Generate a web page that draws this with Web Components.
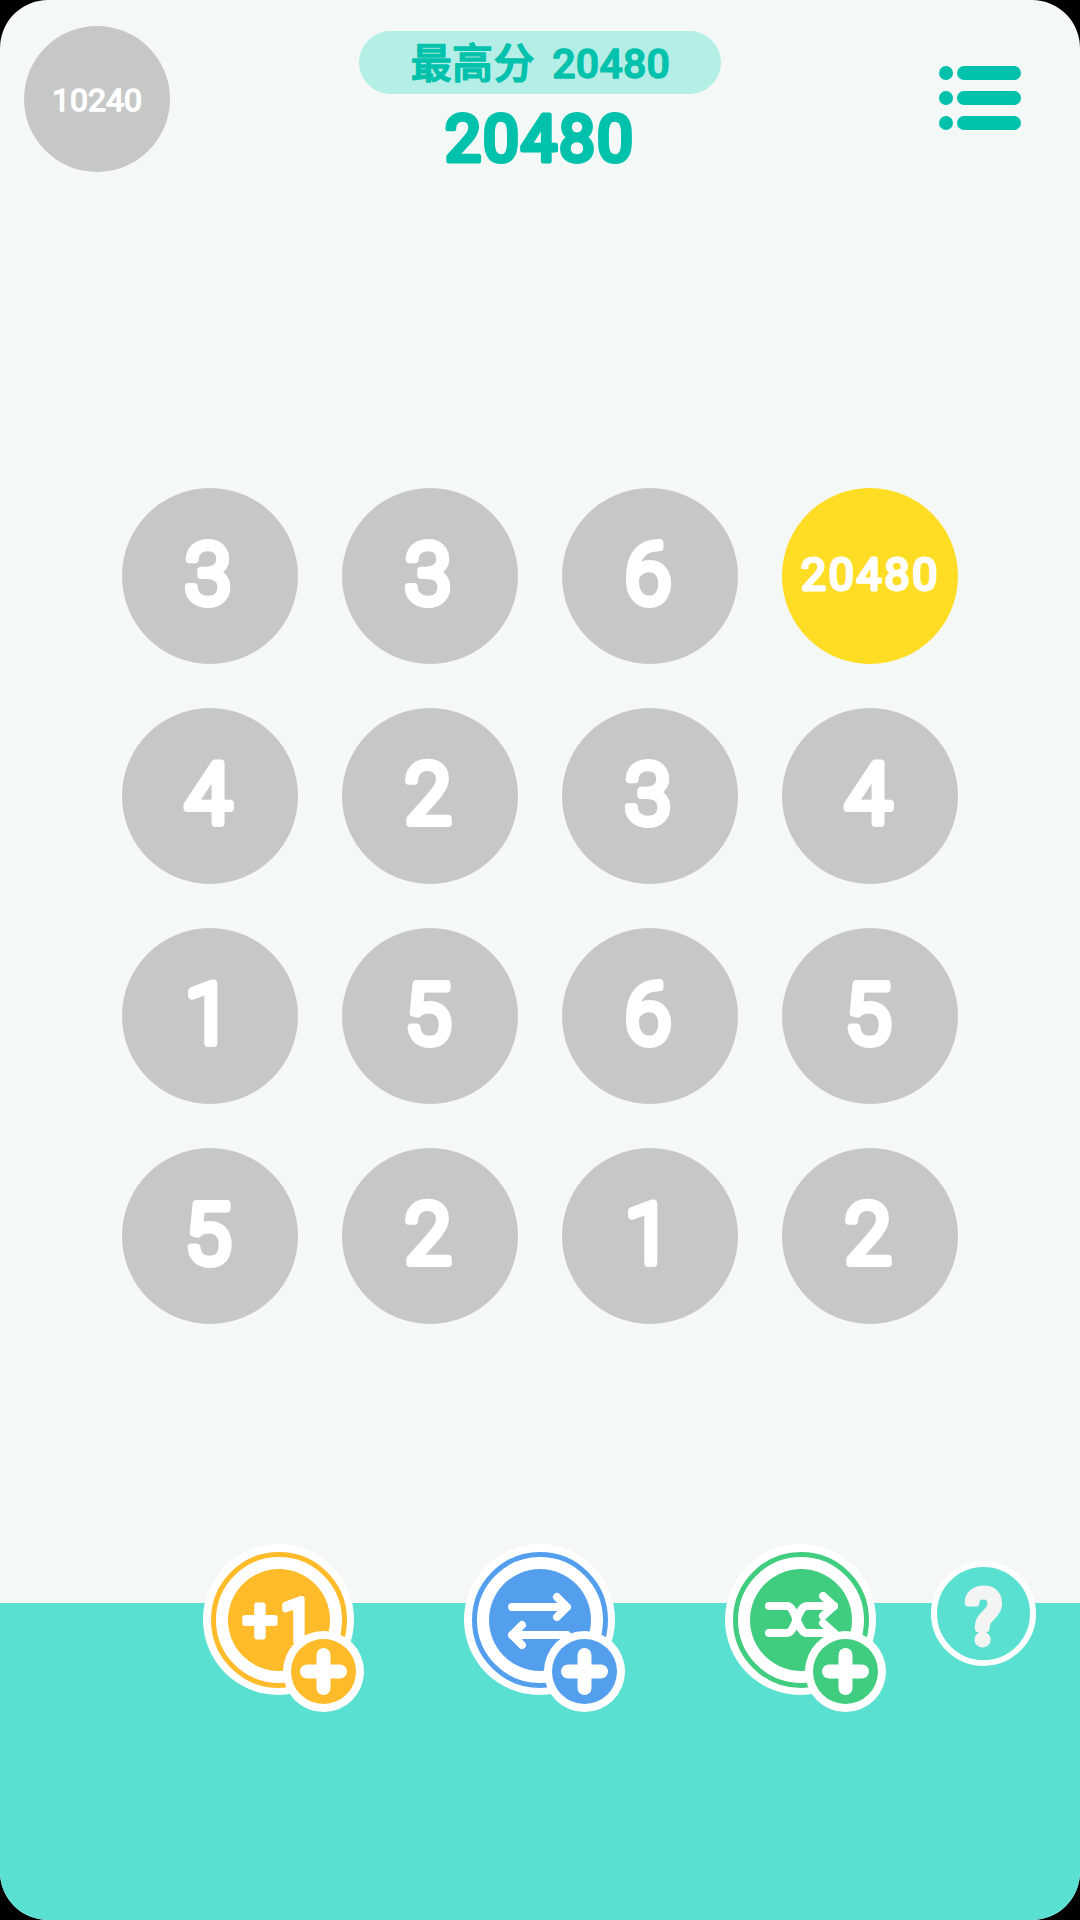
<!DOCTYPE html>
<html lang="zh">
<head>
<meta charset="utf-8">
<title>20480</title>
<style>
  html, body { margin: 0; background: #000; }
  body { width: 1080px; height: 1920px; overflow: hidden; }
</style>
</head>
<body>
<game-app>
  <game-header slot="header" best="最高分 20480" score="20480" level="10240"></game-header>
  <game-board slot="board" values="3,3,6,20480,4,2,3,4,1,5,6,5,5,2,1,2"></game-board>
  <tool-tray slot="tray">
    <tool-button color="#ffbb29">
      <round-text text="+1" size="60" stroke="6" color="#fff" weight="400" spacing="3" style="margin-left:2px"></round-text>
    </tool-button>
    <tool-button color="#539fee">
      <svg width="102" height="102" viewBox="0 0 102 102" fill="none" stroke="#fff" stroke-width="8" stroke-linecap="round" stroke-linejoin="round">
        <path d="M23 38H78M68 28L78 38L68 48"/>
        <path d="M78 66H23M33 56L23 66L33 76"/>
      </svg>
    </tool-button>
    <tool-button color="#41cd7f">
      <svg width="102" height="102" viewBox="0 0 102 102" fill="none" stroke="#fff" stroke-width="8" stroke-linecap="round" stroke-linejoin="round">
        <path d="M19 37H37C46 37 47 64 57 64H84"/>
        <path d="M19 64H37C46 64 47 37 57 37H84"/>
        <path d="M73 27L84 37L73 47"/>
        <path d="M73 54L84 64L73 74"/>
      </svg>
    </tool-button>
    <help-button></help-button>
  </tool-tray>
</game-app>

<script>
const FONT = 'Roboto, "Noto Sans CJK SC", sans-serif'
const SVG_NS = "http://www.w3.org/2000/svg"

// svg text so the stroke can have round joins, the game font is a rounded one
class RoundText extends HTMLElement {
  constructor() {
    super()
    this._shadowRoot = this.attachShadow({ mode: "open" })
  }

  connectedCallback() {
    const value = this.getAttribute("text")
    const size = Number(this.getAttribute("size"))
    const stroke = this.getAttribute("stroke") || 0
    const color = this.getAttribute("color") || "#fff"
    const weight = this.getAttribute("weight") || 500
    const spacing = this.getAttribute("spacing") || 0
    const words = this.getAttribute("words") || 0
    const width = Math.ceil(value.length * size * 0.9 + 12)
    const height = Math.ceil(size * 1.2)
    this._shadowRoot.innerHTML = `<style>
      :host { display: block; flex: none; line-height: 0; }
      svg { display: block; overflow: visible; }
      text { font-family: ${FONT}; font-weight: ${weight}; letter-spacing: ${spacing}px; word-spacing: ${words}px; stroke-linejoin: round; stroke-linecap: round; }
    </style>`
    const svg = document.createElementNS(SVG_NS, "svg")
    svg.setAttribute("width", width)
    svg.setAttribute("height", height)
    const text = document.createElementNS(SVG_NS, "text")
    text.setAttribute("x", width / 2)
    text.setAttribute("y", height / 2 + size * 0.355)
    text.setAttribute("text-anchor", "middle")
    text.setAttribute("font-size", size)
    text.setAttribute("fill", color)
    text.setAttribute("stroke", color)
    text.setAttribute("stroke-width", stroke)
    text.textContent = value
    svg.appendChild(text)
    this._shadowRoot.appendChild(svg)
  }
}

const appTemplate = document.createElement("template")
appTemplate.innerHTML = `
<style>
  :host { display: flex; flex-direction: column; width: 1080px; height: 1920px; background: #f4f8f7; border-radius: 48px; overflow: hidden; }
  .top { height: 488px; }
  .middle { height: 1115px; }
</style>
<div class="top"><slot name="header"></slot></div>
<div class="middle"><slot name="board"></slot></div>
<slot name="tray"></slot>`

class GameApp extends HTMLElement {
  constructor() {
    super()
    this.attachShadow({ mode: "open" }).appendChild(appTemplate.content.cloneNode(true))
  }
}

const headerTemplate = document.createElement("template")
headerTemplate.innerHTML = `
<style>
  :host { display: grid; grid-template-columns: 1fr 362px 1fr; align-items: start; }
  .level { width: 146px; height: 146px; margin: 26px 0 0 24px; border-radius: 50%; background: #c6c8c7; display: flex; align-items: center; justify-content: center; }
  .center { margin-top: 31px; display: flex; flex-direction: column; align-items: center; }
  .best { width: 100%; height: 63px; border-radius: 32px; background: #b4eee6; display: flex; align-items: center; justify-content: center; }
  .score { margin-top: 6px; }
  .menu { justify-self: end; margin: 66px 59px 0 0; display: grid; grid-template-columns: 14px 64px; gap: 11px 4px; }
  .menu i { height: 14px; border-radius: 7px; background: #00c1ab; }
</style>
<div class="level"></div>
<div class="center">
  <div class="best"></div>
  <div class="score"></div>
</div>
<div class="menu"><i></i><i></i><i></i><i></i><i></i><i></i></div>`

class GameHeader extends HTMLElement {
  constructor() {
    super()
    this._shadowRoot = this.attachShadow({ mode: "open" })
    this._shadowRoot.appendChild(headerTemplate.content.cloneNode(true))
  }

  connectedCallback() {
    this._shadowRoot.querySelector(".level").innerHTML =
      `<round-text text="${this.getAttribute("level")}" size="32" stroke="1.5" color="#fff" weight="400"></round-text>`
    this._shadowRoot.querySelector(".best").innerHTML =
      `<round-text text="${this.getAttribute("best")}" size="41" stroke="1.4" color="#00c1ab" words="7" spacing=".3"></round-text>`
    this._shadowRoot.querySelector(".score").innerHTML =
      `<round-text text="${this.getAttribute("score")}" size="64" stroke="5" color="#00c1ab" weight="400" spacing="2"></round-text>`
  }
}

const tileTemplate = document.createElement("template")
tileTemplate.innerHTML = `
<style>
  :host { display: flex; width: 176px; height: 176px; border-radius: 50%; background: #c6c8c7; align-items: center; justify-content: center; }
  :host([big]) { background: #ffdd24; }
  .shift { margin: 0 4px 5px 0; }
  :host([big]) .shift { margin: 0 0 5px 0; }
</style>
<div class="shift"></div>`

class GameTile extends HTMLElement {
  constructor() {
    super()
    this._shadowRoot = this.attachShadow({ mode: "open" })
    this._shadowRoot.appendChild(tileTemplate.content.cloneNode(true))
  }

  connectedCallback() {
    const value = this.getAttribute("value")
    const big = value.length > 1
    if (big) this.setAttribute("big", "")
    this._shadowRoot.querySelector(".shift").innerHTML = big
      ? `<round-text text="${value}" size="45" stroke="3" color="#fff" weight="400" spacing="2.5"></round-text>`
      : `<round-text text="${value}" size="84" stroke="8" color="#fff" weight="300"></round-text>`
  }
}

const boardTemplate = document.createElement("template")
boardTemplate.innerHTML = `
<style>
  :host { display: grid; grid-template-columns: repeat(4, 176px); gap: 44px; padding-left: 122px; }
</style>
<slot></slot>`

class GameBoard extends HTMLElement {
  constructor() {
    super()
    this.attachShadow({ mode: "open" }).appendChild(boardTemplate.content.cloneNode(true))
  }

  connectedCallback() {
    this.getAttribute("values").split(",").forEach(value => {
      const tile = document.createElement("game-tile")
      tile.setAttribute("value", value)
      this.appendChild(tile)
    })
  }
}

const trayTemplate = document.createElement("template")
trayTemplate.innerHTML = `
<style>
  :host { display: flex; flex: 1; align-items: flex-start; background: #5ae0d1; padding-left: 203px; }
  .row { display: flex; align-items: flex-start; gap: 110px; margin-top: -59px; }
</style>
<div class="row"><slot></slot></div>`

class ToolTray extends HTMLElement {
  constructor() {
    super()
    this.attachShadow({ mode: "open" }).appendChild(trayTemplate.content.cloneNode(true))
  }
}

const toolTemplate = document.createElement("template")
toolTemplate.innerHTML = `
<style>
  :host { display: block; position: relative; width: 151px; height: 151px; flex: none; }
  .outer { width: 151px; height: 151px; border-radius: 50%; background: #fff; display: flex; align-items: center; justify-content: center; }
  .ring { width: 136px; height: 136px; border-radius: 50%; border: 5px solid var(--color); box-sizing: border-box; background: #fff; display: flex; align-items: center; justify-content: center; }
  .disk { width: 102px; height: 102px; border-radius: 50%; background: var(--color); display: flex; align-items: center; justify-content: center; overflow: hidden; }
  .badge { position: absolute; left: 80px; top: 87px; width: 81px; height: 81px; border-radius: 50%; background: #fff; display: flex; align-items: center; justify-content: center; }
  .badge svg { display: block; }
  ::slotted(svg) { display: block; }
</style>
<div class="outer"><div class="ring"><div class="disk"><slot></slot></div></div></div>
<div class="badge">
  <svg width="65" height="65" viewBox="0 0 65 65">
    <circle class="dot" cx="32.5" cy="32.5" r="32.5"/>
    <path d="M32.5 16V49M16 32.5H49" fill="none" stroke="#fff" stroke-width="14" stroke-linecap="round"/>
  </svg>
</div>`

class ToolButton extends HTMLElement {
  constructor() {
    super()
    this._shadowRoot = this.attachShadow({ mode: "open" })
    this._shadowRoot.appendChild(toolTemplate.content.cloneNode(true))
  }

  connectedCallback() {
    const color = this.getAttribute("color")
    this.style.setProperty("--color", color)
    this._shadowRoot.querySelector(".dot").setAttribute("fill", color)
  }
}

const helpTemplate = document.createElement("template")
helpTemplate.innerHTML = `
<style>
  :host { display: flex; flex: none; width: 105px; height: 105px; margin: 17px 0 0 -55px; border: 6px solid #fff; box-sizing: border-box; border-radius: 50%; background: #5ae0d1; align-items: center; justify-content: center; }
  round-text { margin-top: 6px; }
</style>
<round-text text="?" size="74" stroke="8" color="#f3f5f4" weight="400"></round-text>`

class HelpButton extends HTMLElement {
  constructor() {
    super()
    this.attachShadow({ mode: "open" }).appendChild(helpTemplate.content.cloneNode(true))
  }
}

window.customElements.define("round-text", RoundText)
window.customElements.define("game-app", GameApp)
window.customElements.define("game-header", GameHeader)
window.customElements.define("game-tile", GameTile)
window.customElements.define("game-board", GameBoard)
window.customElements.define("tool-tray", ToolTray)
window.customElements.define("tool-button", ToolButton)
window.customElements.define("help-button", HelpButton)
</script>
</body>
</html>
